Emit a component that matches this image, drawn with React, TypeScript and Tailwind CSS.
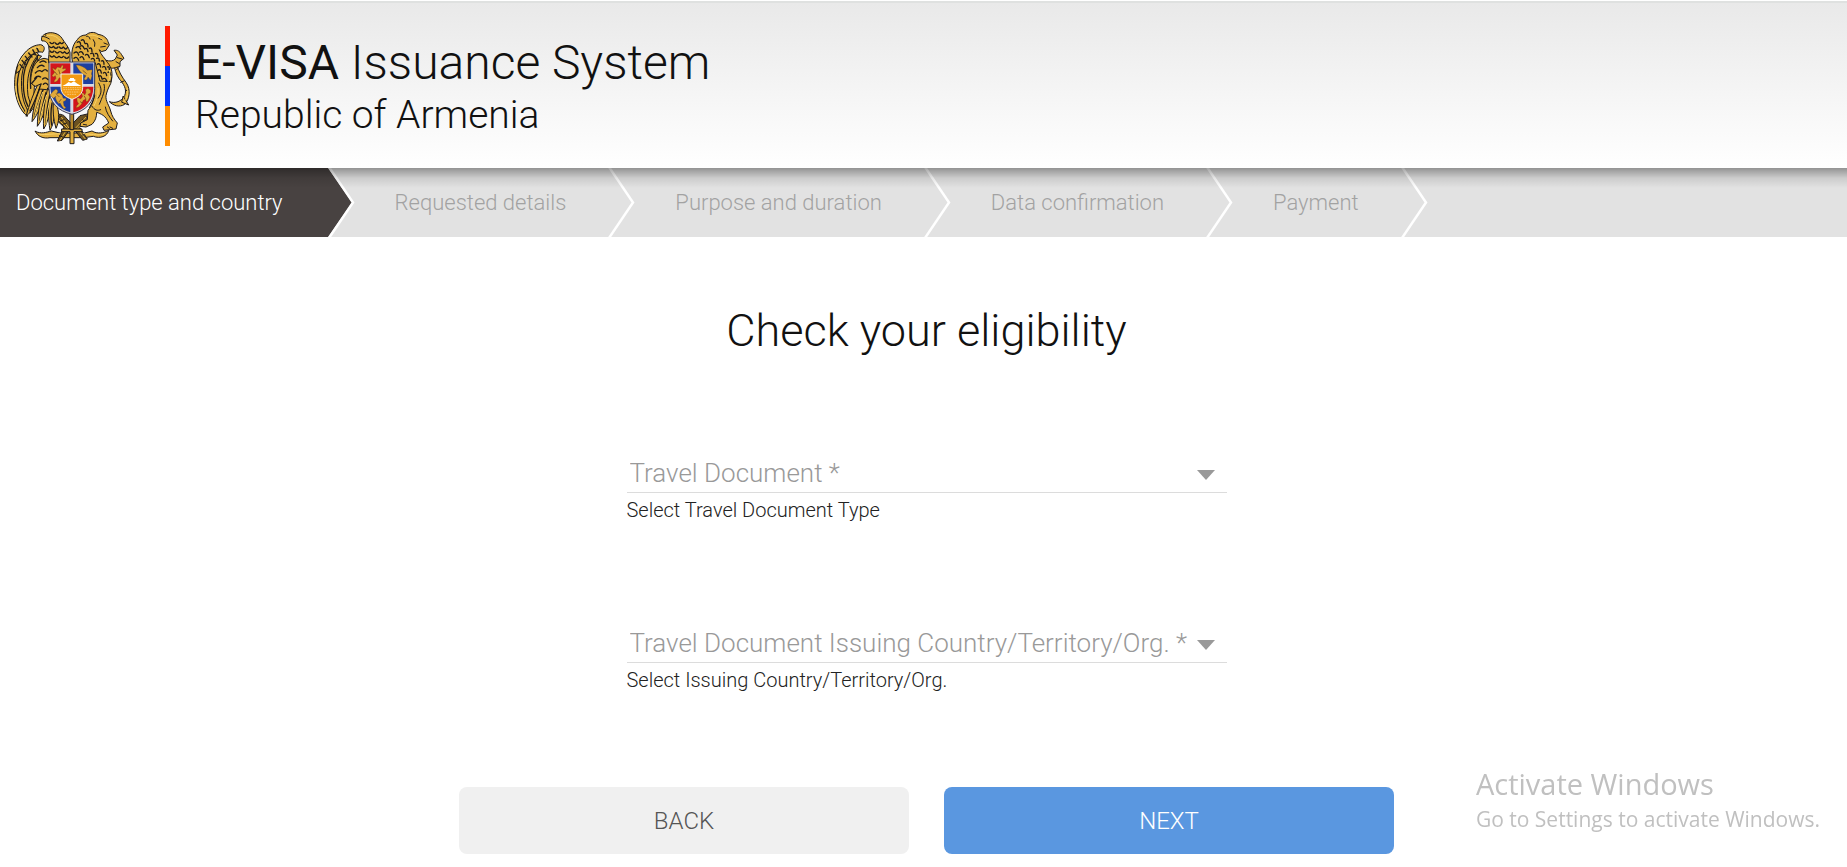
import { useState } from 'react';

const steps = [
  'Document type and country',
  'Requested details',
  'Purpose and duration',
  'Data confirmation',
  'Payment',
];

// Long outer feathers of the eagle's wing, drawn from back to front
const wingFeathers = [
  'M98 150 C62 158 42 205 44 262 C46 300 60 335 82 352 C84 330 76 300 80 270 C82 230 92 190 116 168Z',
  'M92 166 C70 190 60 230 66 280 C70 310 78 328 90 342 C92 310 86 280 92 250 C96 220 106 190 124 172Z',
  'M112 170 C88 200 78 240 84 290 C88 305 92 315 98 322 C104 290 100 260 108 240Z',
  'M116 250 C102 280 88 315 78 352 C94 340 116 306 130 270Z',
  'M122 256 C110 290 98 330 96 368 C114 348 130 306 138 268Z',
  'M132 262 C122 300 112 340 112 382 C130 360 140 316 147 272Z',
  'M143 268 C134 306 128 348 131 390 C146 368 152 328 156 290Z',
  'M150 290 C144 320 144 356 150 394 C162 374 166 344 163 310Z',
  'M160 308 C158 334 160 362 168 388 C178 368 178 344 172 324Z',
];

const wingLines =
  'M96 156 C72 172 54 208 52 256 C52 290 62 318 74 336 M100 162 C80 186 68 216 70 256 C70 284 76 306 84 322 M112 176 C94 200 88 232 92 268 M120 266 C110 292 98 320 90 336 M128 274 C118 304 108 332 103 352 M138 280 C130 312 122 340 119 364 M150 284 C142 320 138 350 138 374 M156 312 C152 336 152 358 155 378';

const lionMane =
  'M232 130 q8 -6 10 6 M228 146 q8 -8 14 4 M244 124 q8 -6 10 8 M222 162 q10 -8 14 6 M240 142 q8 -6 12 6 M256 134 q8 -4 8 10 M222 178 q8 -8 14 6 M238 160 q8 -6 12 6 M254 150 q8 -6 10 8 M268 148 q8 -4 8 10 M240 176 q8 -8 12 6 M256 168 q8 -6 12 8 M272 164 q8 -6 10 8 M286 164 q6 -4 8 8 M274 180 q8 -6 10 6 M290 178 q8 -4 8 8 M292 196 q8 -6 10 8 M304 186 q8 -4 8 10 M294 214 q8 -6 10 8 M308 204 q8 -6 10 8 M322 204 q6 -4 6 8 M296 232 q8 -6 10 8 M310 222 q8 -6 10 8 M324 220 q6 -4 8 8 M308 240 q8 -6 12 6';

const eagleNeck =
  'M150 130 q6 8 12 0 M166 132 q6 8 12 0 M180 130 q6 8 10 0 M148 142 q6 8 12 0 M162 144 q6 8 12 0 M178 144 q6 8 12 0 M192 146 q5 8 10 0 M150 156 q6 8 12 0 M166 158 q6 8 12 0 M182 158 q6 8 12 0 M196 160 q5 8 10 0 M150 170 q6 8 12 0 M164 172 q6 8 12 0 M178 172 q6 8 12 0 M194 174 q6 8 12 0';

function CoatOfArms() {
  return (
    <svg viewBox="39 96 354 342" className="mt-1 h-[114px] w-[118px] shrink-0" role="img" aria-label="Coat of arms of Armenia">
      <g stroke="#1d1a1c" strokeWidth="3" strokeLinejoin="round" strokeLinecap="round" fill="#e3b040">
        {/* sheaf, branch, ribbon and sword under the shield */}
        <path d="M106 397 C124 406 138 400 154 396 L180 402 L254 402 L276 396 C292 406 312 402 326 394 C322 412 300 420 280 412 L252 416 L180 416 L150 416 C130 420 112 412 106 397Z" />
        <path d="M178 346 L168 362 L192 384 L172 426 L186 424 L206 396 L226 396 L248 424 L262 420 L238 384 L268 362 L266 344 L240 350 L216 376 L192 350Z" fill="#6d5220" />
        <path d="M184 354 L206 386 M176 362 L204 390 M262 350 L228 386 M266 360 L232 390 M200 392 L180 424 M234 392 L256 420" stroke="#e3b23c" fill="none" />
        <path d="M174 356 l10 -4 M180 366 l12 -4 M188 376 l12 -4 M258 352 l8 6 M248 362 l8 6 M240 372 l8 6 M178 410 l10 4 M248 408 l8 -4" fill="none" />
        <path d="M186 390 H246 V398 H222 V434 H210 V398 H186Z" />
        <path d="M211 340 H221 V392 H211Z" fill="#b98a2c" />

        {/* eagle wing */}
        {wingFeathers.map((d) => (
          <path key={d} d={d} />
        ))}
        <path d={wingLines} fill="none" strokeWidth="4" />
        <path d="M48 222 C56 172 86 138 122 137 C134 140 136 150 128 160 C108 154 76 172 60 214Z" />
        <path d="M60 196 L68 206 M66 184 L76 196 M76 172 L86 184 M86 162 L96 174 M98 152 L106 166 M110 146 L116 158" strokeWidth="4" />
        <path d="M92 250 C92 212 104 182 132 178 L150 182 L150 258 L140 272 L118 270 L124 254 L106 262Z" />
        <path d="M104 238 q8 -10 18 -4 M106 222 q10 -12 20 -4 M112 206 q10 -12 20 -4 M120 190 q10 -8 18 0 M128 216 q8 -8 14 0 M128 240 q8 -8 16 2 M96 252 l14 -16 M130 256 q8 -8 14 2" fill="none" strokeWidth="4" />

        {/* eagle head */}
        <path d="M138 104 C154 96 178 104 186 118 C194 132 206 142 210 160 L210 192 L146 192 C144 174 150 158 146 142 C144 132 136 124 126 126 C122 118 126 108 138 104Z" />
        <path d={eagleNeck} fill="none" strokeWidth="4" />
        <path d="M126 112 C134 112 142 116 148 120 M136 108 l3 1" fill="none" />

        {/* lion tail and raised paw */}
        <path d="M350 196 C356 218 366 234 378 250 C394 272 388 302 374 316 C358 326 340 320 328 308 C346 314 364 308 374 290 C382 270 370 254 358 240 C348 226 344 210 342 196Z" />
        <path d="M370 292 L386 318 L366 310Z" />
        <path d="M318 184 C330 188 340 186 346 180 L352 168 L342 154 C352 152 360 158 364 166 L372 178 L360 188 L360 202 L346 206 C334 210 324 206 316 200Z" />
        <path d="M352 176 L366 180 M348 188 L358 194 M356 206 L350 212 M372 246 L362 250 M384 272 L376 276" fill="none" />

        {/* lion body */}
        <path d="M282 188 L318 186 C332 204 340 232 332 254 C324 268 320 280 318 290 C316 306 328 320 332 336 C336 352 342 360 352 372 L348 390 L312 394 L308 384 L326 372 C318 350 302 344 290 340 C290 354 286 366 276 376 L258 384 L240 382 L242 372 L262 362 L264 334 C276 320 284 300 284 272Z" />
        <path d="M296 252 C306 268 306 284 294 298 M312 256 C318 272 306 296 298 316 M276 322 C284 334 292 336 302 332 M316 324 C318 340 330 356 338 366 M330 384 l8 4 M250 376 l10 2 M322 384 l6 4 M284 290 C280 306 274 314 268 326" fill="none" />

        {/* lion head and mane */}
        <path d="M218 192 C212 164 216 138 232 122 C236 114 246 108 258 108 C268 98 284 98 294 106 C310 108 322 118 324 128 L328 138 L318 154 L304 158 L298 152 C302 168 314 176 322 190 C336 206 340 226 332 248 L300 246 L286 192Z" />
        <path d={lionMane} fill="none" strokeWidth="4" />
        <path d="M260 112 q8 -2 10 8 M296 118 l10 4 M312 132 l10 4 M302 144 l14 -2 M280 122 q8 10 4 20" fill="none" />
      </g>

      {/* gold highlights */}
      <g fill="none" stroke="#f6d26a" strokeWidth="3" strokeLinecap="round">
        <path d="M56 196 C68 164 92 146 118 144 M140 110 C156 106 170 112 178 122 M266 110 C280 104 298 114 312 124 M328 214 C332 230 328 244 322 252 M294 268 C296 284 292 300 282 320 M47 262 C48 292 58 318 70 334 M382 268 C386 284 380 300 372 308" />
        <path d="M104 352 C110 326 120 300 128 280 M120 366 C124 336 132 310 140 288 M138 376 C140 346 146 320 150 300 M118 406 C140 408 160 404 180 404 M250 404 C272 404 290 412 314 404" />
      </g>

      {/* main shield */}
      <path d="M147 189 H284 V268 C284 310 256 336 216 346 C174 336 147 310 147 268Z" fill="#d9dae2" stroke="#3d3d55" strokeWidth="3" />
      <path d="M151 193 H211 V255 H151Z" fill="#d4141c" />
      <path d="M220 193 H280 V255 H220Z" fill="#1d3fa0" />
      <path d="M151 263 H211 V340 C174 328 152 304 151 263Z" fill="#1d3fa0" />
      <path d="M220 263 H280 C280 304 256 330 220 340Z" fill="#d4141c" />
      <g fill="#e0a83a" stroke="#5b3d16" strokeWidth="1">
        <path d="M158 206 l8 6 6 -8 10 2 4 -8 4 2 -2 10 8 -2 2 4 -12 8 -2 10 8 4 -2 4 -12 -2 -6 10 -8 4 -2 -4 6 -8 -2 -8 -6 4 -4 -4 8 -10 -6 -10Z" />
        <path d="M228 198 C240 198 254 204 262 214 L276 212 C278 218 272 222 276 230 L272 244 L264 234 C262 242 256 246 252 240 L258 230 C246 226 236 214 228 198Z" />
        <path d="M160 276 l8 -6 6 6 -4 8 8 -2 8 6 4 10 8 0 0 6 -8 4 2 12 6 6 -6 4 -6 -8 -6 -10 -4 2 -6 -8 -4 -10 2 -4 -8 6 -4 -4 -6 -6Z" />
        <path d="M256 272 l8 -4 8 6 0 8 -8 4 6 8 -6 12 -6 2 0 -8 -8 4 -6 12 -8 8 -8 2 2 -6 6 -6 -4 -6 -2 -10 6 -2 6 4 6 -8 -4 -10 6 0 4 6 4 -8Z" />
      </g>
      <path d="M164 218 l8 10 M176 212 l4 14 M248 214 l12 10 M168 284 l10 10 M184 300 l-8 10 M252 290 l6 10 M240 308 l8 4" stroke="#5b3d16" strokeWidth="2" />

      {/* inner shield with Ararat */}
      <path d="M183 225 H248 V266 C248 284 236 294 216 301 C196 294 183 284 183 266Z" fill="#f39a12" stroke="#f4f1ea" strokeWidth="3" />
      <path d="M187 261 L197 256 L206 249 L213 252 L222 247 L232 254 L244 261Z M206 241 h20 v5 h-20Z M210 237 h12 v4 h-12Z" fill="#fff" />
      <path d="M189 266 H243 M190 272 H242 M194 279 H238 M202 286 H230" stroke="#fbdca2" strokeWidth="2" strokeDasharray="5 2" />
    </svg>
  );
}

function Chevron({ active }: { active: boolean }) {
  return (
    <svg width="28" height="69" viewBox="0 0 28 69" className="shrink-0" aria-hidden="true">
      {active && <path d="M0 0 H1 L25 34.5 L1 69 H0Z" fill="#484241" />}
      <path d="M2 -1 L26 34.5 L2 70" fill="none" stroke="#fff" strokeWidth="2.5" />
    </svg>
  );
}

interface SelectFieldProps {
  id: string;
  placeholder: string;
  hint: string;
}

function SelectField({ id, placeholder, hint }: SelectFieldProps) {
  return (
    <div className="flex w-full max-w-[600px] flex-col-reverse gap-[3px]">
      <label htmlFor={id} className="text-[20px] leading-7 text-[#222]">
        {hint}
      </label>
      <div className="relative">
        <select
          id={id}
          required
          className="h-10 w-full appearance-none border-b border-[#dcdcdc] bg-transparent pt-px pr-8 pl-[3px] text-[26px] text-[#999] outline-none"
        >
          <option value="">{placeholder}</option>
        </select>
        <svg viewBox="0 0 18 10" className="pointer-events-none absolute right-3 bottom-[13px] h-2.5 w-[18px]" aria-hidden="true">
          <path d="M0 0 H18 L9 10Z" fill="#999" />
        </svg>
      </div>
    </div>
  );
}

export default function App() {
  const [current, setCurrent] = useState(0);

  return (
    <div className="bg-white pt-px font-[Roboto,sans-serif] font-light text-[#111]">
      <header className="relative z-10 flex items-center border-t-2 border-[#dfe1e0] bg-linear-to-b from-[#e9e9e9] to-white pt-[23px] pb-[22px] pl-[13px] after:absolute after:inset-x-0 after:top-full after:h-5 after:bg-linear-to-b after:from-black/35 after:via-black/10 after:to-transparent">
        <CoatOfArms />
        <div className="ml-[34px] flex h-[120px] w-[5px] shrink-0 flex-col">
          <span className="flex-1 bg-[#ff1a00]" />
          <span className="flex-1 bg-[#0033ff]" />
          <span className="flex-1 bg-[#ff8c00]" />
        </div>
        <div className="mt-0.5 ml-[25px]">
          <h1 className="text-[48px] leading-[56px]">
            <strong className="font-normal">E-VISA</strong> Issuance System
          </h1>
          <p className="text-[39px] leading-[48px]">Republic of Armenia</p>
        </div>
      </header>

      <nav className="bg-[#e2e2e2]">
        <ol className="flex h-[69px] text-[22px] whitespace-nowrap">
          {steps.map((step, i) => (
            <li key={step} className="flex">
              <span
                aria-current={i === current ? 'step' : undefined}
                className={
                  i === current
                    ? 'flex items-center bg-[#484241] pr-11 pl-4 text-white'
                    : 'flex items-center pr-[41px] pl-10 text-[#a2a2a2]'
                }
              >
                {step}
              </span>
              <Chevron active={i === current} />
            </li>
          ))}
        </ol>
      </nav>

      <main className="flex flex-col items-center pt-[66px] pl-1.5">
        <h2 className="text-[45px] leading-[56px]">Check your eligibility</h2>

        <form className="mt-[94px] flex w-full flex-col items-center" onSubmit={(e) => e.preventDefault()}>
          <div className="flex w-full flex-col items-center gap-[99px]">
            <SelectField id="document" placeholder="Travel Document *" hint="Select Travel Document Type" />
            <SelectField
              id="country"
              placeholder="Travel Document Issuing Country/Territory/Org. *"
              hint="Select Issuing Country/Territory/Org."
            />
          </div>

          <div className="mt-[93px] grid w-full max-w-[935px] grid-cols-2 gap-[35px] text-[24px]">
            <button
              type="button"
              className="h-[67px] rounded-lg bg-[#f0f0f0] text-[#555]"
              onClick={() => setCurrent(Math.max(current - 1, 0))}
            >
              BACK
            </button>
            <button type="submit" className="h-[67px] rounded-lg bg-[#5a97e0] text-white">
              NEXT
            </button>
          </div>
        </form>
      </main>

      <aside className="pointer-events-none fixed right-[27px] bottom-[33px] z-20 font-['Open_Sans',sans-serif] font-normal text-[#c0c0c0]">
        <p className="text-[29px] leading-10">Activate Windows</p>
        <p className="text-[21px] leading-[30px]">Go to Settings to activate Windows.</p>
      </aside>
    </div>
  );
}
